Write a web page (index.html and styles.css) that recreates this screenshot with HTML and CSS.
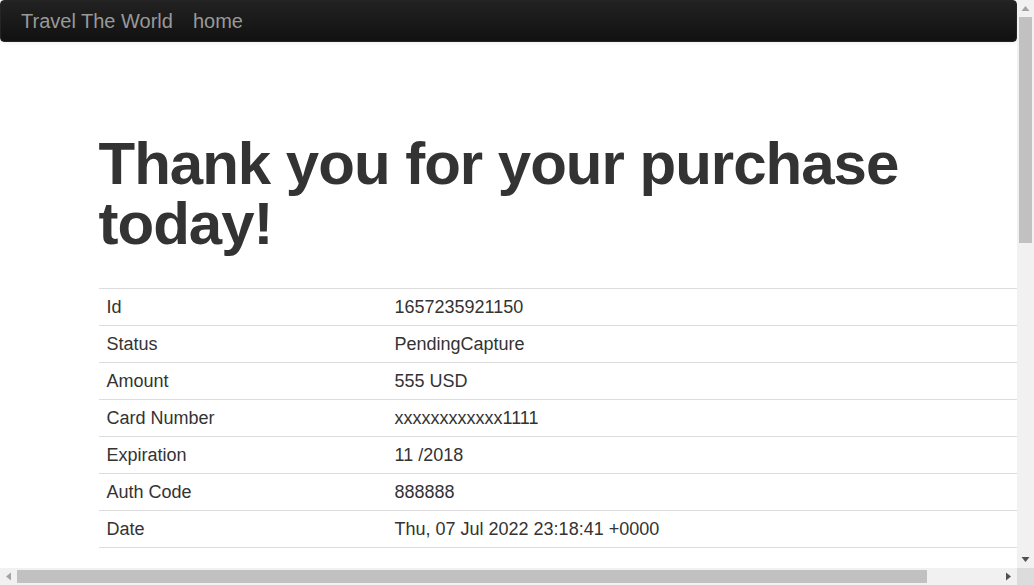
FILE: index.html
```html
<!DOCTYPE html>
<html>
<head>
<meta charset="utf-8">
<title>Travel The World</title>
<link rel="stylesheet" href="styles.css">
</head>
<body>
<div class="window">
  <div class="viewport">
    <div class="navbar">
      <a class="brand" href="#">Travel The World</a>
      <a class="brand" href="#">home</a>
    </div>
    <div class="container">
      <div class="hero">
        <h1>Thank you for your purchase today!</h1>
        <table class="table">
          <tbody>
            <tr><td class="label">Id</td><td>1657235921150</td></tr>
            <tr><td class="label">Status</td><td>PendingCapture</td></tr>
            <tr><td class="label">Amount</td><td>555 USD</td></tr>
            <tr><td class="label">Card Number</td><td>xxxxxxxxxxxx1111</td></tr>
            <tr><td class="label">Expiration</td><td>11 /2018</td></tr>
            <tr><td class="label">Auth Code</td><td>888888</td></tr>
            <tr><td class="label">Date</td><td>Thu, 07 Jul 2022 23:18:41 +0000</td></tr>
          </tbody>
        </table>
      </div>
    </div>
  </div>
  <div class="vscroll">
    <div class="arrow">
      <svg width="17" height="17" viewBox="0 0 17 17"><polygon points="4.5,11 12.5,11 8.5,6" fill="#a3a3a3"/></svg>
    </div>
    <div class="vtrack"><div class="vthumb"></div></div>
    <div class="arrow">
      <svg width="17" height="17" viewBox="0 0 17 17"><polygon points="4.5,6 12.5,6 8.5,11" fill="#505050"/></svg>
    </div>
  </div>
  <div class="hscroll">
    <div class="arrow">
      <svg width="17" height="17" viewBox="0 0 17 17"><polygon points="11,4.5 11,12.5 6,8.5" fill="#a3a3a3"/></svg>
    </div>
    <div class="htrack"><div class="hthumb"></div></div>
    <div class="arrow">
      <svg width="17" height="17" viewBox="0 0 17 17"><polygon points="6,4.5 6,12.5 11,8.5" fill="#505050"/></svg>
    </div>
  </div>
  <div class="corner"></div>
</div>
</body>
</html>
```

FILE: styles.css
```css
html, body {
  margin: 0;
  padding: 0;
  overflow: hidden;
}
body {
  font-family: "Liberation Sans", Arial, sans-serif;
  font-size: 14px;
  line-height: 20px;
  color: #333;
  background: #fff;
}
.window {
  display: grid;
  grid-template-columns: 1017px 17px;
  grid-template-rows: 568px 17px;
  width: 1034px;
  height: 585px;
}
.viewport {
  overflow: hidden;
  min-width: 0;
}
.navbar {
  display: flex;
  min-height: 40px;
  background: linear-gradient(to bottom, #222 0%, #111 100%);
  border: 1px solid #252525;
  border-radius: 4px;
  box-shadow: 0 1px 4px rgba(0,0,0,0.065);
}
.brand {
  display: block;
  font-size: 20px;
  line-height: 20px;
  color: #999;
  text-decoration: none;
  padding: 10px 20px;
  white-space: nowrap;
}
.brand + .brand {
  padding-left: 0;
}
.container {
  width: 940px;
  margin: 20px auto 0;
}
.hero {
  padding: 60px;
  font-size: 18px;
  line-height: 30px;
}
.hero h1 {
  font-size: 60px;
  line-height: 60px;
  letter-spacing: -1px;
  font-weight: bold;
  margin: 12px 0 34px;
  color: #333;
}
.table {
  width: 988px;
  border-collapse: collapse;
  border-spacing: 0;
  border-bottom: 1px solid #ddd;
}
.table td {
  padding: 8px;
  line-height: 20px;
  border-top: 1px solid #ddd;
  text-align: left;
  vertical-align: top;
  white-space: nowrap;
}
.table td.label {
  width: 272px;
}
.vscroll {
  display: flex;
  flex-direction: column;
  background: #f1f1f1;
}
.hscroll {
  display: flex;
  background: #f1f1f1;
}
.arrow {
  width: 17px;
  height: 17px;
  flex: none;
}
.arrow svg {
  display: block;
}
.vtrack {
  flex: 1;
  padding: 0 2px;
}
.vthumb {
  height: 226px;
  background: #c1c1c1;
}
.htrack {
  flex: 1;
  padding: 2px 0;
}
.hthumb {
  width: 910px;
  height: 13px;
  background: #c1c1c1;
}
.corner {
  background: #dcdcdc;
}
```
